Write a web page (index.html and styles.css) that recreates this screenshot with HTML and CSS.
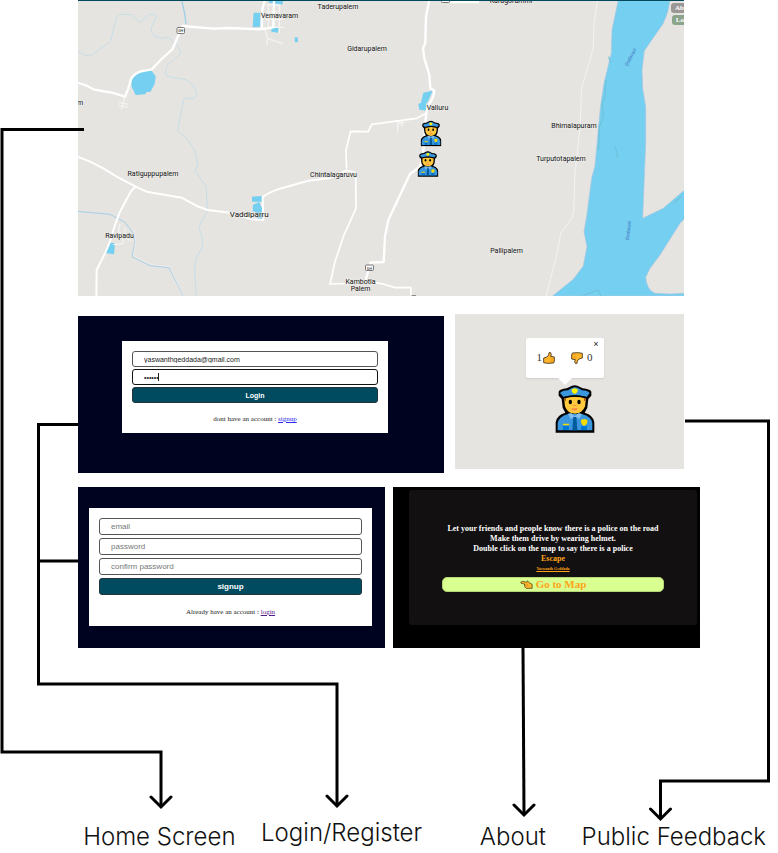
FILE: index.html
```html
<!DOCTYPE html>
<html lang="en">
<head>
<meta charset="utf-8">
<meta name="viewport" content="width=device-width, initial-scale=1">
<title>Police Map – Screens</title>
<link rel="stylesheet" href="styles.css">
</head>
<body>
<svg class="defs" aria-hidden="true">
  <symbol id="officer" viewBox="0 0 118 144">
    <path d="M1 143V112Q4 90 30 83L22 68 19 42 10 32V20Q14 12 34 10L50 2Q58-1 66 2L82 10Q104 12 108 20V32L99 42 96 68 88 83Q114 90 117 112V143Z" fill="#000"/>
    <path d="M26 40Q60 30 92 40L89 64Q82 85 59 86 35 85 29 64Z" fill="#ffc83d"/>
    <path d="M26 38H33L31 48H27ZM92 38H85L87 48H91Z" fill="#a35a1c"/>
    <path d="M14 24Q20 17 38 16L50 9Q59 5 68 9L80 16Q98 17 103 24L94 36Q59 25 25 36Z" fill="#3a96dd"/>
    <path d="M25 38Q59 27 94 38" fill="none" stroke="#000" stroke-width="4"/>
    <path d="M49 13L58 10 67 13Q69 23 58 27 47 23 49 13Z" fill="#fff100"/>
    <ellipse cx="45" cy="51" rx="5" ry="7" fill="#000"/>
    <ellipse cx="71" cy="51" rx="5" ry="7" fill="#000"/>
    <path d="M54 60H63V63H54ZM47 70H68Q64 77 58 77 51 77 47 70Z" fill="#f7894a"/>
    <path d="M7 136V114Q11 94 38 87H80Q108 94 111 114V136Z" fill="#3a96dd"/>
    <path d="M38 86L48 84 58 94 70 84 80 87 72 102 58 95 46 102Z" fill="#83beec"/>
    <path d="M54 96H63L66 136H51Z" fill="#005a9e"/>
    <path d="M23 122H41V135H23ZM77 123H95V135H77Z" fill="#0078d7"/>
    <path d="M23 116H41V121H23ZM77 104L86 102 96 104Q98 118 86 123 76 118 77 104Z" fill="#f5dc00"/>
  </symbol>
  <symbol id="thumb" viewBox="0 0 36 36">
    <path d="M2 18L12 15 17 9 18 2 23 2 25 7 23 13 34 15 34 27 32 33 14 34 2 32Z" fill="#ffb62b" stroke="#3b2a12" stroke-width="2.5" stroke-linejoin="round"/>
    <path d="M22 19H34M22 24H34M21 29H33" stroke="#d98a16" stroke-width="1.5"/>
  </symbol>
</svg>

<main class="board">
  <section class="row row-home" aria-label="Home Screen">
    <div class="map">
      <svg class="map-art" viewBox="78 0 606 296" preserveAspectRatio="xMidYMid slice" role="img" aria-label="Map">
        <rect x="78" width="606" height="296" fill="#e5e4e0"/>
        <!-- streams -->
        <g fill="none" stroke="#c8dde8" stroke-width="3" stroke-linejoin="round">
          <path transform="translate(70 0) scale(.3333)" d="M22 153Q45 170 65 166L95 143Q122 128 124 115L137 60Q140 42 155 43L185 44 212 68 235 44Q258 38 260 50L244 82Q243 104 255 110L275 115 296 112 325 142Q334 156 330 163L296 192Q284 205 288 226 300 233 345 238 365 246 378 272 384 292 370 295H343L337 320 323 392 350 415 373 450 384 495 375 512 408 558 413 630 387 680 397 715V740L377 780 374 810 379 888"/>
          <path transform="translate(70 0) scale(.3333)" d="M335 0L344 40 348 72" stroke="#9fcfea" stroke-width="4"/>
          <path transform="translate(70 150) scale(.3333)" d="M22 184L120 193 165 217 190 250 195 275 186 320 240 347 297 353 340 437" stroke="#a5cfe8"/>
          <path transform="translate(70 150) scale(.3333)" d="M193 238L197 275 190 318 242 343 299 350 341 437" stroke="#f1f0ee" stroke-width="2"/>
        </g>
        <!-- river and ponds -->
        <g fill="#75cff0">
          <path transform="translate(540 0) scale(.3333)" d="M235 0L216 90 214 160 192 250 181 325 165 498 155 535 140 650 132 695 141 740 130 798 100 838 38 888H434V880L390 882 345 880Q320 870 317 832L330 805 360 765 420 670 434 655V570L370 625 308 655 317 430V320L308 265 306 210 313 152 370 70Q386 35 390 0Z" stroke="#a6c6e2" stroke-width="2"/>
          <path transform="translate(70 0) scale(.3333)" d="M184 240Q195 220 225 213H245L257 228 254 252 241 276 230 275 226 283 197 285 185 260ZM551 38H571V80L548 82ZM595 0H640L637 14 598 8ZM605 83L627 84 624 98 604 95ZM674 112L683 112 684 126 675 127Z"/>
          <path transform="translate(70 150) scale(.3333)" d="M546 140L576 138V155H546ZM549 164L568 156 578 180 576 207 560 205 562 190 548 182ZM120 278L135 280 132 313 105 309Z"/>
          <path transform="translate(320 0) scale(.3333)" d="M310 278L338 272 325 302 318 312 320 332 298 329 295 312 303 308Z"/>
        </g>
        <path transform="translate(540 0) scale(.3333)" d="M198 240L195 290 187 310 190 350 178 380 176 450M224 440L232 458 231 474M206 170L212 188M403 608L425 588M130 886L175 870 183 888" fill="none" stroke="#6fc4dc" stroke-width="4"/>
        <!-- lanes -->
        <g fill="none" stroke="#f4f3f1" stroke-width="4">
          <path transform="translate(70 0) scale(.3333)" d="M165 290L154 328M146 307L176 313M146 317L172 321M585 90L593 115 590 136M593 115L638 132M590 15H632M590 35H625M585 58H640M628 15V100M595 15V80M600 82H642"/>
          <path transform="translate(70 150) scale(.3333)" d="M150 222L145 245 158 255 160 280 130 284M165 235V262L182 272"/>
          <path transform="translate(320 0) scale(.3333)" d="M233 362V398M233 368H254M240 376V362M247 380V362"/>
          <path transform="translate(540 0) scale(.3333)" d="M173 0L162 70 160 145 125 265 120 380 105 520 101 635 95 655 63 698 48 775 18 888" stroke-width="3"/>
        </g>
        <!-- roads -->
        <g fill="none" stroke="#fff" stroke-width="7" stroke-linejoin="round">
          <path transform="translate(70 0) scale(.3333)" d="M22 248L48 256 70 268 130 279 165 290 175 265 183 238Q188 225 210 215L245 208 275 177 307 148 328 100 338 78 430 86 480 84 570 88 610 82 612 0M575 88L577 28 585 0"/>
          <path transform="translate(70 150) scale(.3333)" d="M22 20L60 35 100 55 140 80 197 110 230 125 335 143 380 168 413 180 480 188 545 208 580 210 578 142Q590 130 630 116L715 92 780 84 828 62M197 110L182 125 150 185 135 225 120 275 105 310 80 360 79 440" stroke-width="6"/>
          <path transform="translate(320 0) scale(.3333)" d="M328 0L318 50 316 130 309 145 313 175 328 225 331 265 343 272 340 290 322 325 318 345 310 455 300 500 270 522 205 660 195 710 191 786 152 788 137 840M390 6H477"/>
          <path transform="translate(320 0) scale(.3333)" d="M318 340L290 355 155 373 145 395 92 394 78 450 80 512 107 518 108 625 70 710 45 785 30 852 165 848 190 852 225 863 272 862 274 890" stroke-width="5"/>
        </g>
        <g class="route">
          <rect x="177" y="27.500" width="7.500" height="6" rx="1"/>
          <text x="180.800" y="32.300">SH</text>
          <rect x="365.500" y="265" width="8" height="5.500" rx="1"/>
          <text x="369.500" y="269.600">SH</text>
          <rect x="441.500" y="-3" width="8" height="5.500" rx="1"/>
        </g>
        <g class="place">
          <text x="279.500" y="17.500">Vemavaram</text>
          <text x="338" y="9">Taderupalem</text>
          <text x="511" y="3">Karugorummi</text>
          <text x="367" y="51">Gidarupalem</text>
          <text x="437.500" y="110">Valluru</text>
          <text x="574" y="128">Bhimalapuram</text>
          <text x="561" y="161">Turputotapalem</text>
          <text x="333.500" y="177">Chintalagaruvu</text>
          <text x="153" y="175.500">Ratiguppupalem</text>
          <text x="249.300" y="217" class="town">Vaddiparru</text>
          <text x="119.500" y="238">Ravipadu</text>
          <text x="506.500" y="253">Pallipalem</text>
          <text x="360.500" y="284">Kambotla</text>
          <text x="360.500" y="291">Palem</text>
          <text x="80" y="105">m</text>
        </g>
        <path d="M411.500 296H416" stroke="#333"/>
        <g class="water-name">
          <text transform="translate(632 58) rotate(-62)">Godavari</text>
          <text transform="translate(630 231) rotate(-83)">Godavari</text>
        </g>
        <path d="M78 .5H684" stroke="#00485a"/>
        <use href="#officer" x="420.500" y="120.500" width="21" height="26"/>
        <use href="#officer" x="417.500" y="151" width="21" height="26"/>
      </svg>
      <div class="map-nav">
        <button type="button" class="nav-about">Ab</button>
        <button type="button" class="nav-login">Lo</button>
      </div>
    </div>
  </section>

  <section class="row row-middle">
    <div class="screen login-screen" id="login">
      <form class="panel">
        <input type="email" aria-label="email" value="yaswanthgeddada@gmail.com">
        <div class="field">
          <input class="active" type="password" aria-label="password" value="secret">
          <span class="caret"></span>
        </div>
        <button type="button">Login</button>
        <p>dont have an account : <a href="#signup">signup</a></p>
      </form>
    </div>
    <div class="screen feedback-screen">
      <div class="popup">
        <button type="button" class="close" aria-label="Close">×</button>
        <div class="votes">
          <button type="button" class="vote">1<svg class="thumb" aria-hidden="true"><use href="#thumb"/></svg></button>
          <button type="button" class="vote"><svg class="thumb down" aria-hidden="true"><use href="#thumb"/></svg><span>0</span></button>
        </div>
      </div>
      <svg class="officer" role="img" aria-label="Police officer"><use href="#officer"/></svg>
    </div>
  </section>

  <section class="row row-bottom">
    <div class="screen signup-screen" id="signup">
      <form class="panel">
        <input type="email" aria-label="email" placeholder="email">
        <input type="password" aria-label="password" placeholder="password">
        <input type="password" aria-label="confirm password" placeholder="confirm password">
        <button type="button">signup</button>
        <p>Already have an account : <a class="visited" href="#login">login</a></p>
      </form>
    </div>
    <div class="screen about-screen">
      <div class="about-panel">
        <p>Let your friends and people know there is a police on the road</p>
        <p>Make them drive by wearing helmet.</p>
        <p>Double click on the map to say there is a police</p>
        <p class="accent">Escape</p>
        <a class="author" href="#author">Yaswanth Geddada</a>
        <button type="button" class="go">
          <svg class="hand" viewBox="0 0 38 27" aria-hidden="true"><path d="M2 6Q6 3 12 5L20 7 22 2 27 8 36 13V25L18 25 14 21 13 12 3 10Z" fill="#ffb62b" stroke="#3b2a12" stroke-width="2" stroke-linejoin="round"/><path d="M16 14H23M17 18H23" stroke="#a5660c"/></svg>
          Go to Map
        </button>
      </div>
    </div>
  </section>

  <section class="labels">
    <h2>Home Screen</h2>
    <h2 class="raised">Login/Register</h2>
    <h2>About</h2>
    <h2>Public Feedback</h2>
  </section>

  <svg class="connectors" viewBox="0 0 778 853" preserveAspectRatio="none" aria-hidden="true">
    <path d="M84 129.500H2V752H161V806"/>
    <path d="M78 424.500H38.500V684H337V805M38.500 561H78"/>
    <path d="M523 648L524 814"/>
    <path d="M685 421H768.500V781H660.500V818"/>
    <path class="head" d="M151 797L161 807 171 797M327 796L337 806 347 796M514 805L524 815 534 805M650.500 809L660.500 819 670.500 809"/>
  </svg>
</main>
</body>
</html>
```
FILE: styles.css
```css
* {
  box-sizing: border-box;
}

body {
  margin: 0;
  background: #fff;
  font-family: "Liberation Serif", serif;
}

p,
h2 {
  margin: 0;
}

button,
input {
  font-family: "Liberation Sans", sans-serif;
}

.defs {
  position: absolute;
  width: 0;
  height: 0;
}

.board {
  position: relative;
  overflow: hidden;
}

.row {
  display: grid;
  align-items: start;
}

.row-home {
  grid-template-columns: 78fr 606fr 94fr;
}

.row-middle {
  grid-template-columns: 78fr 366fr 11fr 229fr 94fr;
  padding-top: 18px;
}

.row-bottom {
  grid-template-columns: 78fr 307fr 8fr 307fr 78fr;
  padding-top: 14px;
}

.map {
  grid-column: 2;
  position: relative;
  height: 296px;
  overflow: hidden;
}

.map-art {
  display: block;
  width: 100%;
  height: 100%;
}

.place {
  font: 400 7px Roboto, sans-serif;
  fill: #111;
  stroke: #eeedea;
  stroke-width: 1px;
  paint-order: stroke;
  text-anchor: middle;
}

.town {
  font-size: 8px;
}

.water-name {
  font: italic 500 5px Roboto, sans-serif;
  fill: #4a86cb;
  text-anchor: middle;
}

.route {
  font: 500 4px Roboto, sans-serif;
  fill: #444;
  text-anchor: middle;
}

.route rect {
  fill: #fff;
  stroke: #777;
}

.map-nav {
  position: absolute;
  top: 3px;
  right: 0;
  display: flex;
  flex-direction: column;
  align-items: flex-end;
  gap: 2px;
}

.map-nav button {
  height: 10px;
  padding: 0 0 0 4px;
  border: 0;
  border-radius: 3px 0 0 3px;
  color: #fff;
  font: bold 7px/10px "Liberation Serif", serif;
}

.map-nav .nav-about {
  background: #9b9797;
}

.map-nav .nav-login {
  background: #8ba58c;
}

.login-screen {
  grid-column: 2;
  min-height: 157px;
  margin-top: 2px;
  padding: 25px 56px 0 44px;
  background: #000320;
}

.panel {
  display: flex;
  flex-direction: column;
  gap: 2px;
  padding: 10px;
  background: #fff;
}

.panel input,
.panel button {
  display: block;
  width: 100%;
  height: 16px;
  border: 1px solid #555;
  border-radius: 3px;
  font-size: 7px;
}

.panel input {
  padding: 0 11px;
  background: #fff;
  color: #222;
  line-height: 12px;
  outline: 0;
}

.panel input::placeholder {
  color: #777;
}

.panel .active {
  border-color: #111;
}

.field {
  position: relative;
}

.caret {
  position: absolute;
  left: 26px;
  top: 4px;
  width: 1px;
  height: 8px;
  background: #222;
}

.panel button {
  padding: 0;
  border-color: #24343a;
  background: #004b5f;
  color: #fff;
  font-weight: bold;
}

.panel p {
  padding-top: 10px;
  color: #222;
  font-size: 7px;
  line-height: 8px;
  text-align: center;
}

.panel a {
  color: #2a2af0;
}

.panel .visited {
  color: #551a8b;
}

.login-screen .panel {
  min-height: 91px;
}

.feedback-screen {
  grid-column: 4;
  display: flex;
  flex-direction: column;
  align-items: center;
  gap: 7px;
  min-height: 155px;
  padding-top: 24px;
  background: #e5e4e0;
}

.popup {
  position: relative;
  display: flex;
  flex-direction: column;
  width: 78px;
  height: 40px;
  margin-right: 10px;
  padding: 2px 4px;
  border-radius: 2px;
  background: #fff;
  box-shadow: 0 1px 2px rgba(0, 0, 0, 0.1);
}

.popup::after {
  content: "";
  position: absolute;
  top: 100%;
  left: 50%;
  border: 7px solid transparent;
  border-top-color: #fff;
  border-bottom: 0;
  transform: translateX(-50%);
}

.close {
  align-self: flex-end;
  width: 7px;
  height: 8px;
  padding: 0;
  border: 0;
  background: none;
  color: #222;
  font-size: 9px;
  line-height: 8px;
}

.votes {
  display: flex;
  justify-content: space-between;
  padding: 3px 7px;
}

.vote {
  display: flex;
  align-items: center;
  gap: 1px;
  padding: 0;
  border: 0;
  background: none;
  color: #333;
  font: 11px/13px "Liberation Serif", serif;
}

.vote span {
  padding-left: 3px;
}

.thumb {
  width: 12px;
  height: 12px;
}

.down {
  transform: rotate(180deg);
}

.officer {
  width: 40px;
  height: 48px;
  margin-left: 11px;
}

.signup-screen {
  grid-column: 2;
  min-height: 161px;
  padding: 21px 13px 0 11px;
  background: #000320;
}

.signup-screen .panel {
  gap: 3px;
  min-height: 118px;
}

.signup-screen .panel input,
.signup-screen .panel button {
  height: 17px;
  font-size: 8px;
}

.about-screen {
  grid-column: 4;
  min-height: 161px;
  padding: 3px 3px 0 16px;
  background: #000;
}

.about-panel {
  display: flex;
  flex-direction: column;
  min-height: 135px;
  padding: 34px 33px 0;
  border-radius: 3px;
  background: #121011;
  color: #fff;
  font-size: 8px;
  font-weight: bold;
  line-height: 10px;
  text-align: center;
}

.accent {
  color: #ffa21a;
}

.author {
  color: #ffa21a;
  font-size: 4px;
}

.go {
  display: flex;
  align-items: center;
  justify-content: center;
  gap: 3px;
  height: 15px;
  margin-top: 3px;
  padding: 0;
  border: 1px solid #b5d676;
  border-radius: 5px;
  background: #d8ff8f;
  color: #ffa21a;
  font: bold 11px/13px "Liberation Serif", serif;
}

.hand {
  width: 13px;
  height: 9px;
}

.labels {
  display: grid;
  grid-template-columns: 80fr 160fr 206fr 138fr 182fr 12fr;
  align-items: end;
  padding-top: 169px;
}

.labels h2 {
  padding-top: 4px;
  color: #111;
  font: 300 24px/32px Inter, sans-serif;
  text-align: center;
  white-space: nowrap;
}

.labels h2:first-child {
  grid-column: 2;
}

.labels .raised {
  padding: 0 0 4px;
}

.connectors {
  position: absolute;
  inset: 0;
  width: 100%;
  height: 100%;
  fill: none;
  stroke: #000;
  stroke-width: 3px;
  pointer-events: none;
}

.connectors path {
  vector-effect: non-scaling-stroke;
}

.head {
  stroke-linecap: round;
}
```
